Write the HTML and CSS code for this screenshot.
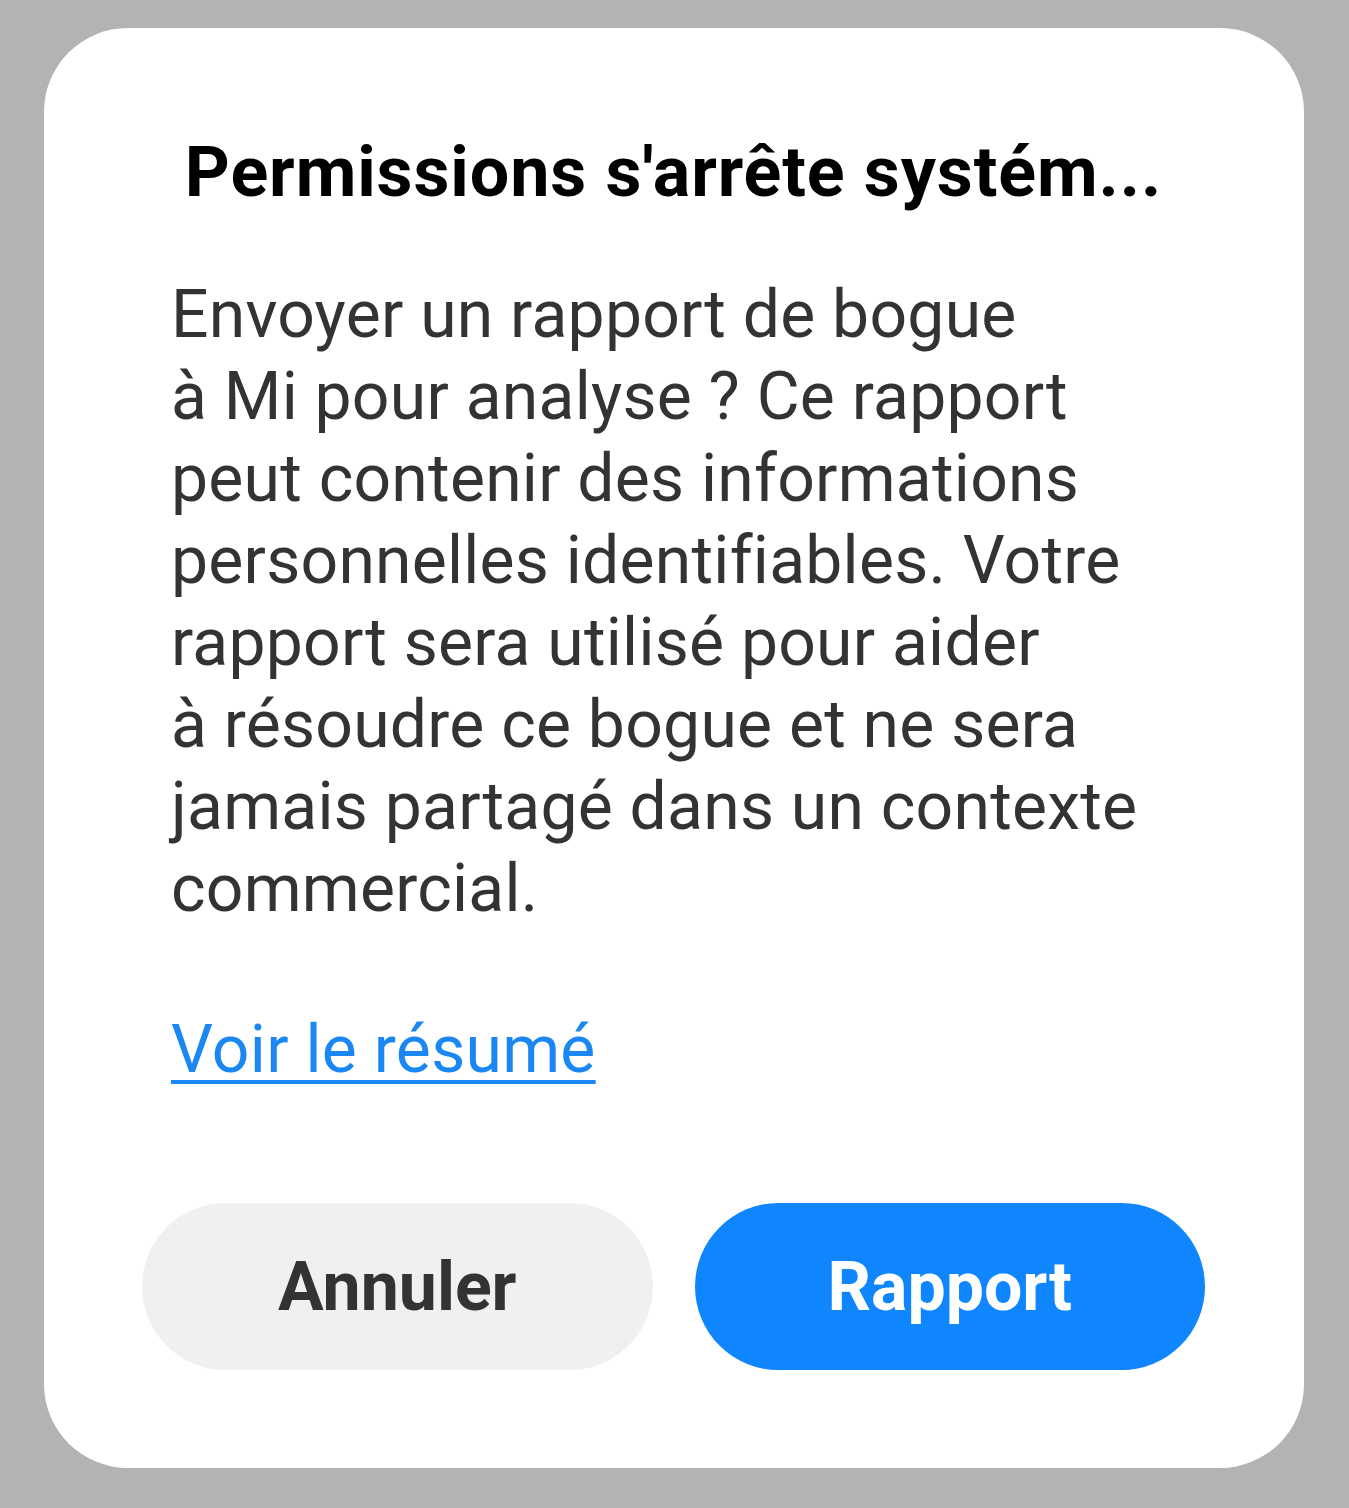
FILE: index.html
```html
<!DOCTYPE html>
<html lang="fr">
  <head>
    <meta charset="UTF-8" />
    <meta name="viewport" content="width=device-width, initial-scale=1.0" />
    <title>Rapport de bogue</title>
    <link rel="stylesheet" href="styles.css">
  </head>
  <body>
    <div id="dialog">
      <h1 class="dialog-title">Permissions s'arrête systém...</h1>
      <p class="dialog-message">
        Envoyer un rapport de bogue<br>
        à Mi pour analyse ? Ce rapport<br>
        peut contenir des informations<br>
        personnelles identifiables. Votre<br>
        rapport sera utilisé pour aider<br>
        à résoudre ce bogue et ne sera<br>
        jamais partagé dans un contexte<br>
        commercial.
      </p>
      <a class="summary-link" href="#">Voir le résumé</a>
      <div class="dialog-buttons">
        <button class="btn btn-cancel">Annuler</button>
        <button class="btn btn-report">Rapport</button>
      </div>
    </div>
  </body>
</html>
```

FILE: styles.css
```css
body {
  margin: 0;
  background-color: #b3b3b3;
  font-family: Roboto, "Noto Sans", sans-serif;
  height: 1508px;
  overflow: hidden;
}
#dialog {
  margin: 28px 45px 0 44px;
  height: 1440px;
  box-sizing: border-box;
  background-color: #fff;
  border-radius: 84px;
  padding: 104px 99px 98px 98px;
  display: flex;
  flex-direction: column;
}
.dialog-title {
  margin: 0;
  font-size: 70px;
  line-height: 80px;
  letter-spacing: 0.9px;
  font-weight: bold;
  color: #000;
  text-align: center;
}
.dialog-message {
  margin: 62px 0 0 29px;
  font-size: 66px;
  line-height: 82px;
  letter-spacing: 0.25px;
  color: #333;
}
.summary-link {
  margin: 79px 0 0 29px;
  align-self: flex-start;
  font-size: 66px;
  line-height: 82px;
  letter-spacing: 0.3px;
  color: #1a87f2;
  text-decoration: underline;
  text-decoration-thickness: 4px;
  text-underline-offset: 8px;
}
.dialog-buttons {
  margin-top: auto;
  display: flex;
  gap: 42px;
}
.btn {
  flex: 1;
  height: 167px;
  border: none;
  border-radius: 84px;
  font-family: inherit;
  font-size: 68px;
  font-weight: bold;
  cursor: pointer;
}
.btn-cancel {
  background-color: #f0f0f0;
  color: #333;
}
.btn-report {
  background-color: #0f86fe;
  color: #fff;
}
```
